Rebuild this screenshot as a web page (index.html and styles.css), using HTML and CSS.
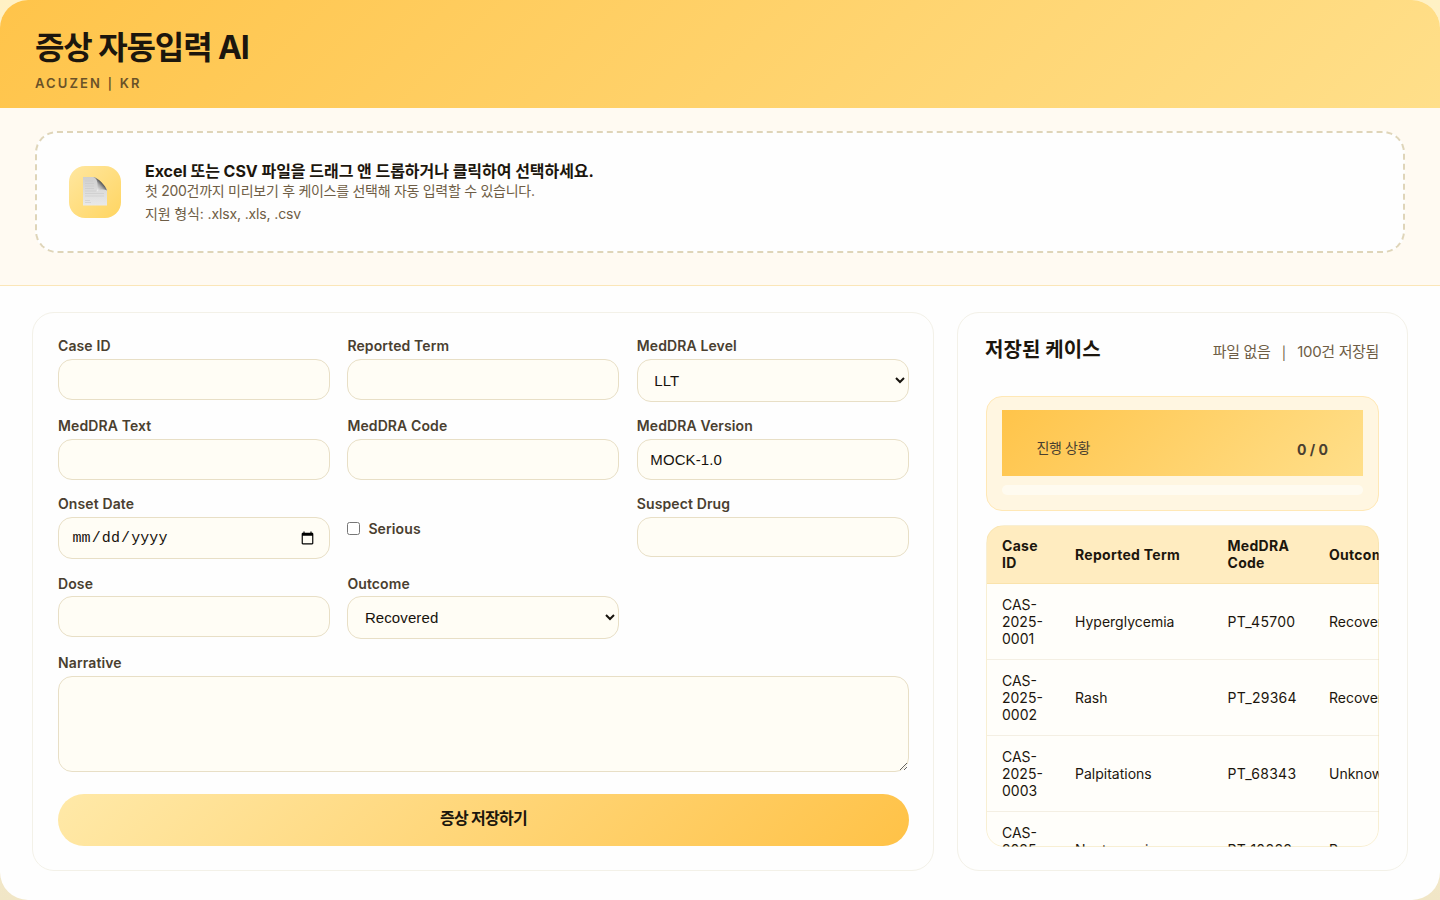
FILE: index.html
```html
<!DOCTYPE html>
<html lang="ko">
<head>
<meta charset="utf-8">
<title>증상 자동입력 AI</title>
<link rel="stylesheet" href="styles.css">
</head>
<body>
<div class="shell">
  <header class="header">
    <h1 class="title">증상 자동입력 AI</h1>
    <p class="subtitle">ACUZEN <span class="sep">|</span> KR</p>
  </header>
  <section class="upload">
    <div class="dropzone">
      <div class="drop-icon">
        <svg class="doc" width="26" height="30" viewBox="0 0 26 30">
          <defs>
            <linearGradient id="paper" x1="0" y1="0" x2="0" y2="1"><stop offset="0" stop-color="#cfcfcf"/><stop offset="1" stop-color="#e9e9e9"/></linearGradient>
            <linearGradient id="fold" x1="0" y1="1" x2="1" y2="0"><stop offset=".2" stop-color="#eeeeee"/><stop offset=".45" stop-color="#a8a8a8"/><stop offset=".62" stop-color="#4e4e4e"/></linearGradient>
          </defs>
          <path d="M1 1H12C15 2 24 11 25 14V29.500H1Z" fill="url(#paper)"/>
          <path d="M11 1C16 2 16 9 15 15.500C18 13 22 13 25 14.500C24 10 16 1.500 11 1Z" fill="url(#fold)"/>
          <path d="M3 5H11M3 7.500H12M3 10H12M3 12.500H12M3 15H14M3 17.500H22M3 20H22M3 24.500H8M3 26.500H9" stroke="#c4c4c4" stroke-width=".5"/>
        </svg>
      </div>
      <div>
        <div class="drop-title">Excel 또는 CSV 파일을 드래그 앤 드롭하거나 클릭하여 선택하세요.</div>
        <div class="drop-text">첫 200건까지 미리보기 후 케이스를 선택해 자동 입력할 수 있습니다.</div>
        <div class="drop-text formats">지원 형식: .xlsx, .xls, .csv</div>
      </div>
    </div>
  </section>
  <main class="main">
    <form class="card form">
      <div class="grid">
        <label class="field">Case ID<input class="control" type="text"></label>
        <label class="field">Reported Term<input class="control" type="text"></label>
        <label class="field">MedDRA Level<select class="control select"><option>LLT</option><option>PT</option></select></label>
        <label class="field">MedDRA Text<input class="control" type="text"></label>
        <label class="field">MedDRA Code<input class="control" type="text"></label>
        <label class="field">MedDRA Version<input class="control" type="text" value="MOCK-1.0"></label>
        <label class="field">Onset Date<input class="control date" type="date"></label>
        <label class="check"><input class="checkbox" type="checkbox">Serious</label>
        <label class="field">Suspect Drug<input class="control short" type="text"></label>
        <label class="field tight">Dose<input class="control" type="text"></label>
        <label class="field tight">Outcome<select class="control select"><option>Recovered</option><option>Unknown</option></select></label>
        <label class="field wide">Narrative<textarea class="control narrative"></textarea></label>
      </div>
      <button class="save" type="button">증상 저장하기</button>
    </form>
    <aside class="card cases">
      <div class="cases-head">
        <h2 class="cases-title">저장된 케이스</h2>
        <div class="meta"><span>파일 없음</span><span class="bar">|</span><span>100건 저장됨</span></div>
      </div>
      <div class="progress">
        <div class="progress-head"><span class="progress-label">진행 상황</span><b class="count">0 / 0</b></div>
        <div class="track"></div>
      </div>
      <div class="table-wrap">
        <table class="table">
          <colgroup><col class="c1"><col class="c2"><col class="c3"><col class="c4"></colgroup>
          <thead><tr><th>Case<br>ID</th><th>Reported Term</th><th>MedDRA<br>Code</th><th>Outcome</th></tr></thead>
          <tbody>
            <tr><td>CAS-<br>2025-<br>0001</td><td>Hyperglycemia</td><td class="code">PT_45700</td><td>Recovered</td></tr>
            <tr><td>CAS-<br>2025-<br>0002</td><td>Rash</td><td class="code">PT_29364</td><td>Recovered</td></tr>
            <tr><td>CAS-<br>2025-<br>0003</td><td>Palpitations</td><td class="code">PT_68343</td><td>Unknown</td></tr>
            <tr><td>CAS-<br>2025-<br>0004</td><td>Neutropenia</td><td class="code">PT_10888</td><td>Recovered</td></tr>
          </tbody>
        </table>
      </div>
    </aside>
  </main>
</div>
</body>
</html>
```
FILE: styles.css
```css
* { box-sizing: border-box; }
body {
  margin: 0;
  height: 900px;
  overflow: hidden;
  background: linear-gradient(180deg, #fff1c4 0%, #fdf6e3 50%, #f1e6c6 100%);
  font-family: Inter, "Noto Sans CJK KR", sans-serif;
  color: #1c160d;
}
.shell {
  height: 900px;
  border-radius: 28px;
  overflow: hidden;
  background: #fefefe;
  display: flex;
  flex-direction: column;
}
.header {
  height: 108px;
  flex: none;
  padding: 28px 35px 0;
  background: linear-gradient(135deg, #ffc44a 0%, #ffdf8a 100%);
}
.title { margin: 0; font-size: 32px; line-height: 40px; font-weight: 700; letter-spacing: -1.1px; }
.subtitle { margin: 7px 0 0; font-size: 13px; line-height: 16px; font-weight: 600; letter-spacing: 2.1px; color: #6a5228; }
.sep { font-size: 11.500px; margin: 0 .4px; }
.upload {
  height: 178px;
  flex: none;
  padding: 23px 35px 0;
  background: #fffaf2;
  border-bottom: 1px solid #fbe6b8;
}
.dropzone {
  height: 122px;
  display: flex;
  align-items: center;
  gap: 24px;
  padding: 0 32px;
  border: 2px dashed #dfd5b9;
  border-radius: 22px;
  background: #fefefe;
}
.drop-icon {
  width: 52px;
  height: 52px;
  border-radius: 16px;
  display: grid;
  place-items: center;
  background: linear-gradient(135deg, #ffe7a0, #ffd561);
}
.doc { margin-bottom: 2px; }
.drop-title { font-size: 16px; line-height: 20px; font-weight: 700; letter-spacing: -.04px; }
.drop-text { font-size: 14px; line-height: 19px; color: #6e5d45; letter-spacing: -.28px; }
.formats { margin-top: 4px; letter-spacing: -.13px; }
.main { display: flex; gap: 23px; padding: 26px 32px 0; }
.card { height: 559px; border: 1px solid #f3f1e8; border-radius: 22px; background: #fefefe; }
.form { width: 902px; padding: 24px 24px 0 25px; }
.grid { display: grid; grid-template-columns: repeat(3, 272px); grid-template-rows: 64px 62px 64px 63px 118px; gap: 16px 17.400px; }
.field { display: flex; flex-direction: column; align-items: stretch; gap: 5px; font-size: 14px; line-height: 17px; font-weight: 600; letter-spacing: .11px; color: #4a3f30; }
.tight { gap: 4px; }
.control {
  flex: none;
  height: 41px;
  width: 100%;
  margin: 0;
  padding: 0 12.500px;
  border: 1px solid #e8dfc6;
  border-radius: 14px;
  outline: 0;
  background: #fffdf5;
  color: #17130d;
  font: 15px "Liberation Sans", Arial, sans-serif;
  letter-spacing: .1px;
}
.short { height: 40px; }
.select { height: 43px; }
.date { height: 42px; font: 15px "Liberation Mono", monospace; letter-spacing: .1px; }
.wide { grid-column: 1 / -1; }
.narrative { height: 96px; resize: vertical; }
.check { display: flex; align-items: center; height: 66px; gap: 8px; font-size: 14px; font-weight: 600; letter-spacing: .11px; color: #4a3f30; }
.checkbox { width: 13px; height: 13px; margin: 0; }
.save {
  display: block;
  width: 851px;
  height: 52px;
  margin-top: 22px;
  padding: 0 0 4px;
  border: 0;
  border-radius: 26px;
  background: linear-gradient(135deg, #ffe9a8, #ffc247);
  font: 700 16px/20px Inter, "Noto Sans CJK KR", sans-serif;
  letter-spacing: -.7px;
  color: #1c160d;
}
.cases { width: 451px; padding: 22px 28px 0; }
.cases-head { display: flex; justify-content: space-between; height: 61px; }
.cases-title { margin: 1px 0 0 -1px; font-size: 20px; line-height: 28px; font-weight: 700; letter-spacing: .1px; }
.meta { display: flex; gap: 11.500px; padding-top: 7px; font-size: 15px; line-height: 20px; color: #6e5d45; letter-spacing: -.35px; }
.bar { padding-top: 1px; font-size: 13px; }
.progress { height: 115px; padding: 13px 15px 0; border: 1px solid #ffe8b6; border-radius: 16px; background: #fff6e1; }
.progress-head {
  display: flex;
  justify-content: space-between;
  height: 66px;
  padding: 28px 35px 0 34.500px;
  background: linear-gradient(135deg, #ffc44a, #ffdf8a);
  font-size: 14px;
  line-height: 20px;
  color: #4a3f30;
}
.progress-label { letter-spacing: -.4px; }
.count { padding-top: 2px; }
.track { height: 10px; margin-top: 9px; border-radius: 5px; background: #fffbf0; }
.table-wrap { position: relative; height: 322px; margin-top: 14px; padding: 1px 0 0 1px; overflow: hidden; border-radius: 18px; background: #fffefa; }
.table-wrap::after {
  content: "";
  position: absolute;
  inset: 0;
  border: 1px solid rgba(240, 222, 165, .45);
  border-radius: 18px;
  pointer-events: none;
}
.table { width: 470px; table-layout: fixed; border-collapse: separate; border-spacing: 0; font-size: 14px; line-height: 17px; color: #1c160d; }
.c1 { width: 73px; }
.c2 { width: 152.5px; }
.c3 { width: 101.5px; }
.c4 { width: 143px; }
.table th, .table td { padding: 0 0 0 15px; text-align: left; vertical-align: middle; }
.table th { height: 58px; padding-bottom: 1px; font-weight: 700; letter-spacing: .28px; background: #ffecc0; border-bottom: 1px solid #fae3ac; }
.table td { height: 76px; border-bottom: 1px solid #f4efe3; }
.table .code { letter-spacing: .28px; }
```
